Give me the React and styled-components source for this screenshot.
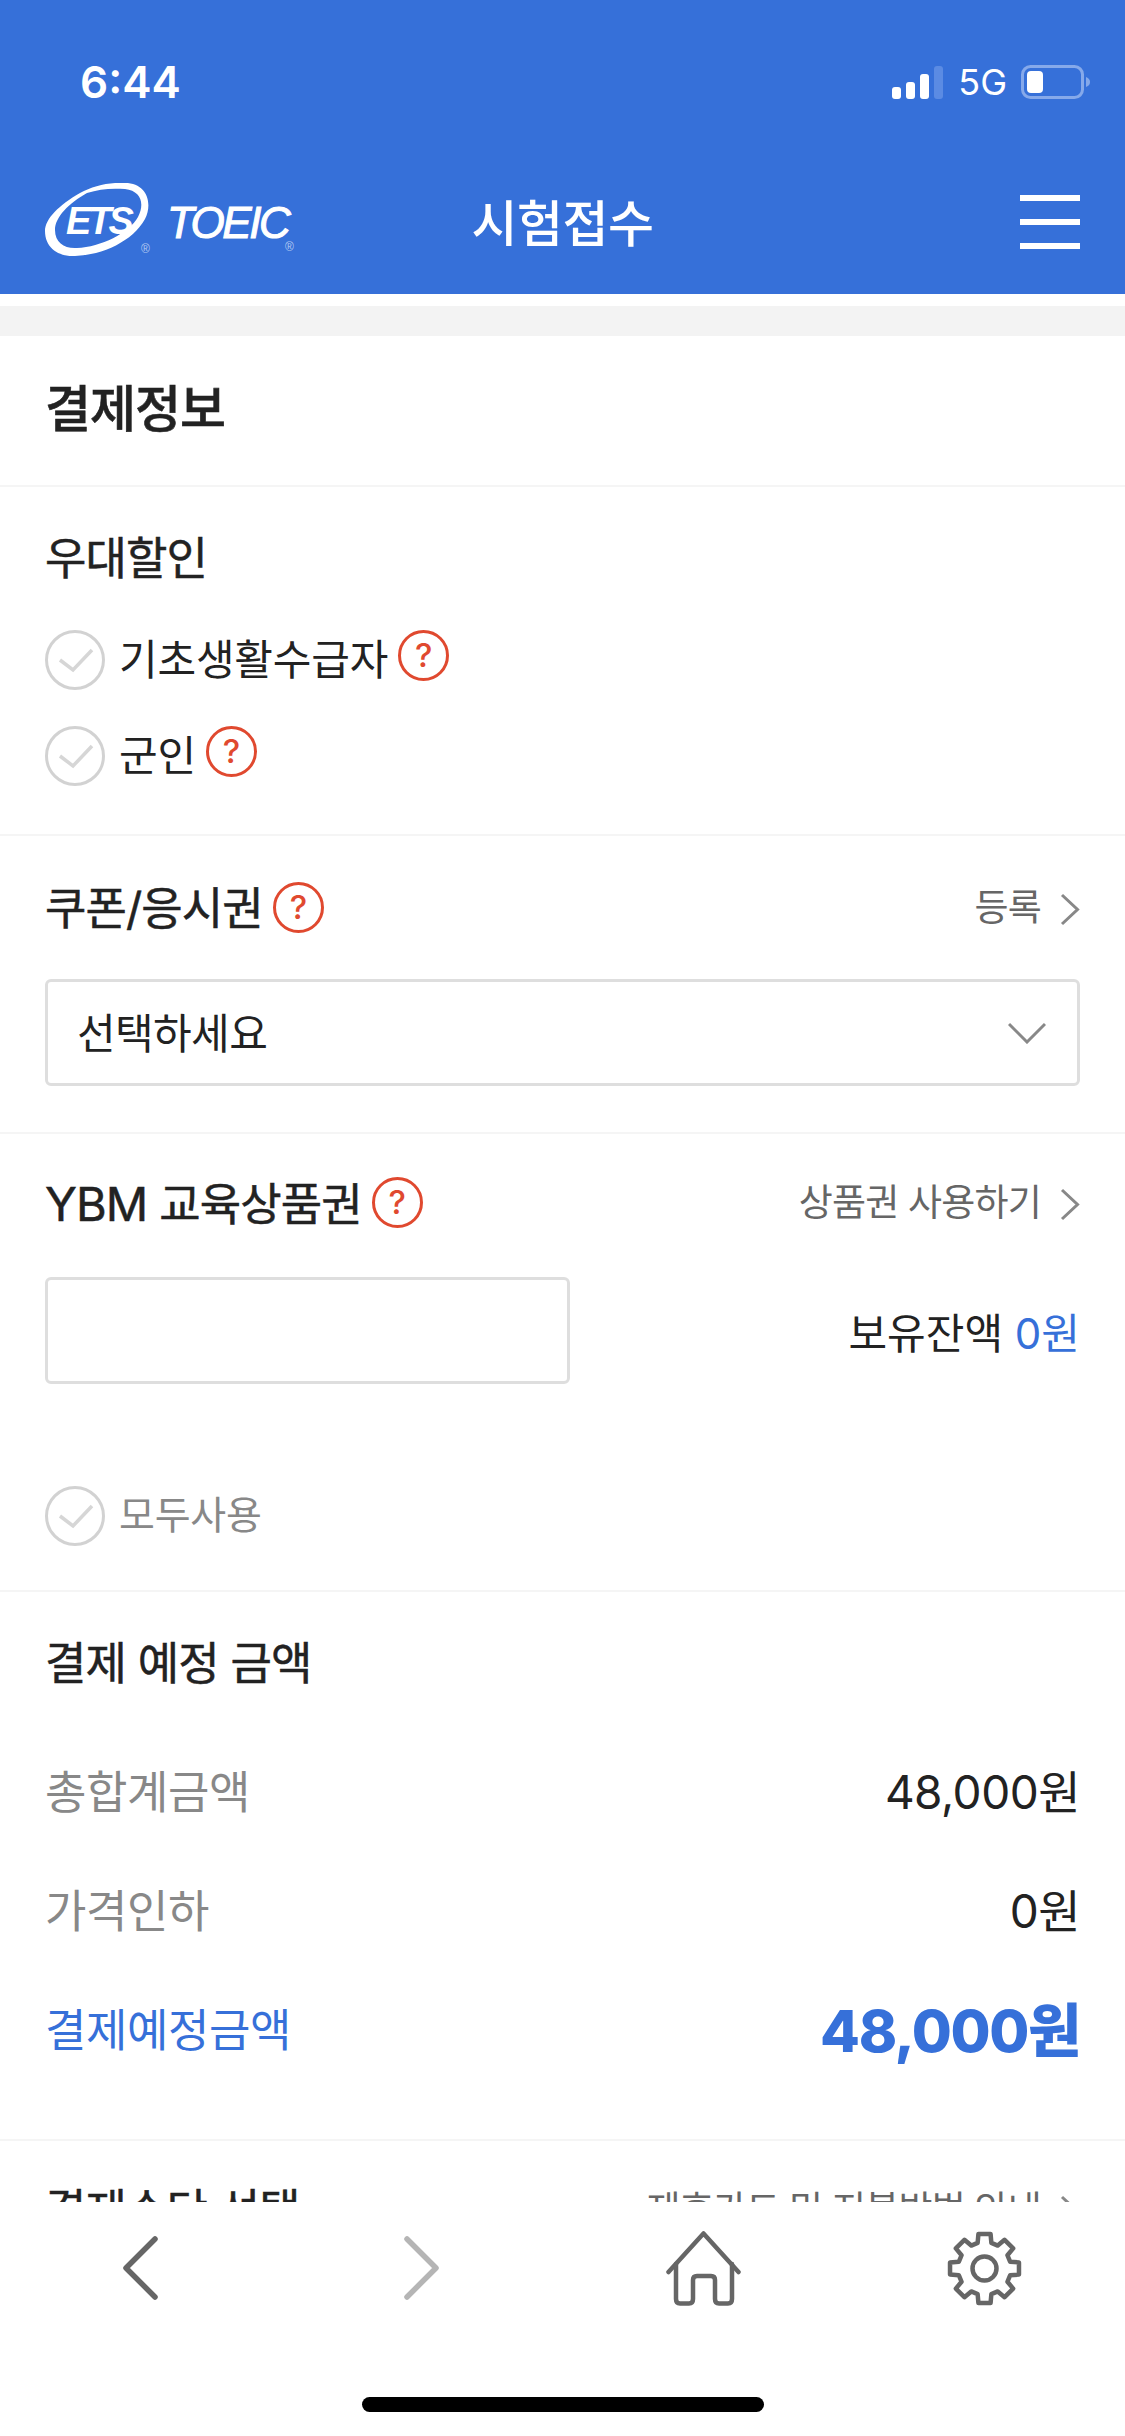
import styled, { createGlobalStyle } from "styled-components";

const BLUE = "#3670d9";
const FONT = `Inter, "Noto Sans CJK KR", sans-serif`;

const GlobalStyle = createGlobalStyle`
    * {
        box-sizing: border-box;
    }

    html, body {
        margin: 0;
        padding: 0;
        background: #ffffff;
    }

    body {
        font-family: ${FONT};
        color: #222222;
    }
`;

function gearPath() {
    const c = 37.5;
    const point = (r, deg) => {
        const rad = (deg - 90) * Math.PI / 180;
        return `${(c + r * Math.cos(rad)).toFixed(2)} ${(c + r * Math.sin(rad)).toFixed(2)}`;
    };
    const parts = [];
    for (let i = 0; i < 8; i++) {
        const a = i * 45;
        parts.push(point(26.5, a - 15), point(35, a - 10), point(35, a + 10), point(26.5, a + 15));
    }
    return `M${parts.join(" L")} Z`;
}

function CheckItem({ label, muted, help }) {
    return (
        <CheckRow>
            <svg width="60" height="60" viewBox="0 0 60 60" fill="none">
                <circle cx="30" cy="30" r="28.5" stroke="#d2d2d2" strokeWidth="3" />
                <path d="M15 30 L28 40 L47 20" stroke="#d6d6d6" strokeWidth="3.5" />
            </svg>
            <CheckLabel $muted={muted}>{label}</CheckLabel>
            {help ? <Help $lift="-9px">?</Help> : null}
        </CheckRow>
    );
}

function SectionHead({ title, link }) {
    return (
        <HeadRow>
            <HeadTitle>
                <Label>{title}</Label>
                <Help>?</Help>
            </HeadTitle>
            <HeadLink>
                <LinkText>{link}</LinkText>
                <svg width="20" height="33" viewBox="0 0 20 33" fill="none">
                    <path d="M2 2 L17.5 16.5 L2 31" stroke="#888888" strokeWidth="3" />
                </svg>
            </HeadLink>
        </HeadRow>
    );
}

export default function App() {
    return (
        <Screen>
            <GlobalStyle />
            <Header>
                <StatusBar>
                    <Time>6:44</Time>
                    <StatusIcons>
                        <svg width="52" height="33" viewBox="0 0 52 33">
                            <rect x="0" y="21" width="9" height="12" rx="3" fill="#fff" />
                            <rect x="14" y="16" width="9" height="17" rx="3" fill="#fff" />
                            <rect x="28" y="8" width="9" height="25" rx="3" fill="#fff" />
                            <rect x="42" y="0" width="9" height="33" rx="3" fill="#5b8be3" />
                        </svg>
                        <Network>5G</Network>
                        <svg width="70" height="34" viewBox="0 0 70 34">
                            <rect x="1.5" y="1.5" width="60" height="31" rx="8" fill="none" stroke="#86a9ea" strokeWidth="3" />
                            <rect x="6" y="6" width="16" height="22" rx="4" fill="#fff" />
                            <path d="M65 12 C68 13 69 15 69 17 C69 19 68 21 65 22 Z" fill="#86a9ea" />
                        </svg>
                    </StatusIcons>
                </StatusBar>
                <NavBar>
                    <Logo>
                        <svg width="108" height="75" viewBox="0 0 108 75" fill="#ffffff" fillRule="evenodd">
                            <path d="M35 10 C14 22 0 36 0 48 C0 65 14 74 30 73 C58 72 88 58 100 36 C108 20 102 0 80 0 C64 -1 48 3 35 10 Z M42 10 C24 20 10 34 10 47 C10 60 20 66 32 65 C56 64 84 50 93 34 C100 20 96 8 80 6 C66 5 54 6 42 10 Z" />
                        </svg>
                        <LogoEts>ETS</LogoEts>
                        <LogoMark $left="96px" $top="60px">®</LogoMark>
                        <LogoToeic>TOEIC</LogoToeic>
                        <LogoMark $left="240px" $top="58px">®</LogoMark>
                    </Logo>
                    <PageTitle>시험접수</PageTitle>
                    <Burger>
                        <span />
                        <span />
                        <span />
                    </Burger>
                </NavBar>
            </Header>

            <Main>
                <TitleBlock>결제정보</TitleBlock>

                <Section $pad="42px 45px 48px">
                    <Label>우대할인</Label>
                    <CheckList>
                        <CheckItem label="기초생활수급자" help />
                        <CheckItem label="군인" help />
                    </CheckList>
                </Section>

                <Section $pad="43px 45px 46px">
                    <SectionHead title="쿠폰/응시권" link="등록" />
                    <SelectBox>
                        <SelectText>선택하세요</SelectText>
                        <svg width="38" height="22" viewBox="0 0 38 22" fill="none">
                            <path d="M1 2 L19 20 L37 2" stroke="#888888" strokeWidth="3" />
                        </svg>
                    </SelectBox>
                </Section>

                <Section $pad="40px 45px 44px">
                    <SectionHead title={<><Latin>YBM</Latin> 교육상품권</>} link="상품권 사용하기" />
                    <VoucherRow>
                        <VoucherInput />
                        <Balance>
                            보유잔액 <BlueText>0원</BlueText>
                        </Balance>
                    </VoucherRow>
                    <UseAll>
                        <CheckItem label="모두사용" muted />
                    </UseAll>
                </Section>

                <Section $pad="42px 45px 82px">
                    <Label>결제 예정 금액</Label>
                    <AmountList>
                        <AmountRow>
                            <AmountName>총합계금액</AmountName>
                            <AmountValue>48,000원</AmountValue>
                        </AmountRow>
                        <AmountRow>
                            <AmountName>가격인하</AmountName>
                            <AmountValue>0원</AmountValue>
                        </AmountRow>
                        <AmountRow>
                            <AmountName $total>결제예정금액</AmountName>
                            <AmountValue $total>48,000원</AmountValue>
                        </AmountRow>
                    </AmountList>
                </Section>

                <Section $pad="40px 45px 40px">
                    <HeadRow>
                        <Label>결제수단 선택</Label>
                        <HeadLink>
                            <LinkText>제휴카드 및 지불방법 안내</LinkText>
                            <svg width="20" height="33" viewBox="0 0 20 33" fill="none">
                                <path d="M2 2 L17.5 16.5 L2 31" stroke="#888888" strokeWidth="3" />
                            </svg>
                        </HeadLink>
                    </HeadRow>
                </Section>
            </Main>

            <BottomNav>
                <NavIcons>
                    <svg width="35" height="64" viewBox="0 0 35 64" fill="none">
                        <path d="M32 3 L3 32 L32 61" stroke="#666666" strokeWidth="5.5" strokeLinecap="round" strokeLinejoin="round" />
                    </svg>
                    <svg width="35" height="64" viewBox="0 0 35 64" fill="none">
                        <path d="M3 3 L32 32 L3 61" stroke="#b5b5b5" strokeWidth="5.5" strokeLinecap="round" strokeLinejoin="round" />
                    </svg>
                    <svg width="75" height="75" viewBox="0 0 75 75" fill="none" stroke="#666666" strokeWidth="4.5" strokeLinecap="round" strokeLinejoin="round">
                        <path d="M2.5 41 L37.5 2.5 L72.5 41" />
                        <path d="M10 33 V68 Q10 72.5 14 72.5 H23 Q27 72.5 27 68 V49 Q27 45 31 45 H45 Q49 45 49 49 V68 Q49 72.5 53 72.5 H62 Q66 72.5 66 68 V33" />
                    </svg>
                    <svg width="75" height="75" viewBox="0 0 75 75" fill="none" stroke="#666666" strokeWidth="4.5" strokeLinejoin="round">
                        <path d={gearPath()} />
                        <circle cx="37.5" cy="37.5" r="12" />
                    </svg>
                </NavIcons>
                <HomeBar />
            </BottomNav>
        </Screen>
    );
}

const Screen = styled.div`
    display: flex;
    flex-direction: column;
    width: 1125px;
    height: 2436px;
    overflow: hidden;
    background: #ffffff;
`;

const Header = styled.header`
    height: 294px;
    flex-shrink: 0;
    background: ${BLUE};
    color: #ffffff;
`;

const StatusBar = styled.div`
    display: flex;
    align-items: center;
    justify-content: space-between;
    height: 164px;
    padding: 0 34px 0 80px;
`;

const Time = styled.span`
    font-size: 44px;
    font-weight: 600;
`;

const StatusIcons = styled.div`
    display: flex;
    align-items: center;
    gap: 14px;
`;

const Network = styled.span`
    font-size: 36px;
    line-height: 36px;
`;

const NavBar = styled.div`
    display: grid;
    grid-template-columns: 1fr auto 1fr;
    align-items: center;
    height: 112px;
    padding: 0 45px 0 45px;
`;

const Logo = styled.div`
    position: relative;
    height: 75px;
`;

const LogoEts = styled.span`
    position: absolute;
    left: 21px;
    top: 18px;
    font-family: "Liberation Sans", sans-serif;
    font-size: 38px;
    line-height: 40px;
    font-weight: 700;
    font-style: italic;
    letter-spacing: -3px;
`;

const LogoToeic = styled.span`
    position: absolute;
    left: 122px;
    top: 17px;
    font-family: "Liberation Sans", sans-serif;
    font-size: 44px;
    line-height: 46px;
    font-style: italic;
    letter-spacing: -2.5px;
    -webkit-text-stroke: 1px #ffffff;
`;

const LogoMark = styled.span`
    position: absolute;
    left: ${(props) => props.$left};
    top: ${(props) => props.$top};
    font-family: "Liberation Sans", sans-serif;
    font-size: 12px;
    line-height: 12px;
    color: #b3c9f1;
`;

const PageTitle = styled.h1`
    margin: 0;
    font-size: 50px;
    font-weight: 500;
    letter-spacing: -0.5px;
`;

const Burger = styled.div`
    display: flex;
    flex-direction: column;
    gap: 18px;
    justify-self: end;
    width: 60px;
    margin-top: 4px;

    span {
        display: block;
        height: 6px;
        background: #ffffff;
    }
`;

const Main = styled.main`
    flex: 1;
    min-height: 0;
    overflow: hidden;
    margin-top: 12px;
    border-top: 30px solid #f3f3f3;
`;

const TitleBlock = styled.h2`
    margin: 0;
    height: 151px;
    padding: 42px 45px 0;
    font-size: 50px;
    line-height: 62px;
    font-weight: 500;
    letter-spacing: -1px;
    -webkit-text-stroke: 0.6px #222222;
    border-bottom: 2px solid #f5f5f5;
`;

const Section = styled.section`
    padding: ${(props) => props.$pad};
    border-bottom: 2px solid #f5f5f5;
`;

const Label = styled.div`
    font-size: 45px;
    line-height: 60px;
    font-weight: 400;
    letter-spacing: -0.9px;
    -webkit-text-stroke: 0.5px #222222;
    white-space: nowrap;
`;

const Latin = styled.span`
    font-size: 47px;
`;

const CheckList = styled.div`
    display: flex;
    flex-direction: column;
    gap: 36px;
    margin-top: 41px;
`;

const CheckRow = styled.div`
    display: flex;
    align-items: center;
    height: 60px;
`;

const CheckLabel = styled.span`
    margin: 0 0 8px 14px;
    font-size: ${(props) => (props.$muted ? "39px" : "42px")};
    letter-spacing: -0.2px;
    color: ${(props) => (props.$muted ? "#888888" : "#222222")};
`;

const Help = styled.span`
    display: flex;
    align-items: center;
    justify-content: center;
    flex-shrink: 0;
    width: 51px;
    height: 51px;
    margin: ${(props) => props.$lift || "-3px"} 0 0 10px;
    border: 3px solid #e0492f;
    border-radius: 50%;
    color: #e0492f;
    font-size: 33px;
    font-weight: 500;
    line-height: 1;
`;

const HeadRow = styled.div`
    display: flex;
    align-items: center;
    justify-content: space-between;
    height: 60px;
`;

const HeadTitle = styled.div`
    display: flex;
    align-items: center;
`;

const HeadLink = styled.div`
    display: flex;
    align-items: center;
    gap: 19px;
    color: #666666;
    font-size: 37px;
    letter-spacing: -0.8px;
`;

const LinkText = styled.span`
    margin-bottom: 8px;
`;

const SelectBox = styled.div`
    display: flex;
    align-items: center;
    justify-content: space-between;
    height: 107px;
    margin-top: 40px;
    padding: 0 31px 0 29px;
    border: 3px solid #dedede;
    border-radius: 6px;
    font-size: 42px;
    letter-spacing: -0.6px;
`;

const SelectText = styled.span`
    margin-bottom: 4px;
`;

const VoucherRow = styled.div`
    display: flex;
    align-items: center;
    justify-content: space-between;
    margin-top: 43px;
`;

const VoucherInput = styled.input`
    display: block;
    width: 525px;
    height: 107px;
    border: 3px solid #dedede;
    border-radius: 6px;
    background: #ffffff;
    outline: none;
`;

const Balance = styled.div`
    font-size: 42px;
    letter-spacing: 0;
`;

const BlueText = styled.span`
    color: ${BLUE};
`;

const UseAll = styled.div`
    margin-top: 102px;
`;

const AmountList = styled.div`
    display: flex;
    flex-direction: column;
    gap: 59px;
    margin-top: 65px;
`;

const AmountRow = styled.div`
    display: flex;
    align-items: center;
    justify-content: space-between;
    height: 60px;
`;

const AmountName = styled.span`
    font-size: 45px;
    letter-spacing: -0.4px;
    color: ${(props) => (props.$total ? BLUE : "#888888")};
`;

const AmountValue = styled.span`
    font-size: ${(props) => (props.$total ? "58px" : "46px")};
    font-weight: ${(props) => (props.$total ? 800 : 400)};
    letter-spacing: ${(props) => (props.$total ? "-1.4px" : "-0.5px")};
    color: ${(props) => (props.$total ? BLUE : "#222222")};
`;

const BottomNav = styled.nav`
    position: relative;
    display: flex;
    flex-direction: column;
    align-items: center;
    height: 234px;
    flex-shrink: 0;
    background: #ffffff;
`;

const NavIcons = styled.div`
    display: grid;
    grid-template-columns: repeat(4, 1fr);
    align-items: center;
    justify-items: center;
    width: 100%;
    margin-top: 28px;
    height: 76px;
`;

const HomeBar = styled.div`
    width: 402px;
    height: 15px;
    margin-top: 91px;
    border-radius: 8px;
    background: #000000;
`;
